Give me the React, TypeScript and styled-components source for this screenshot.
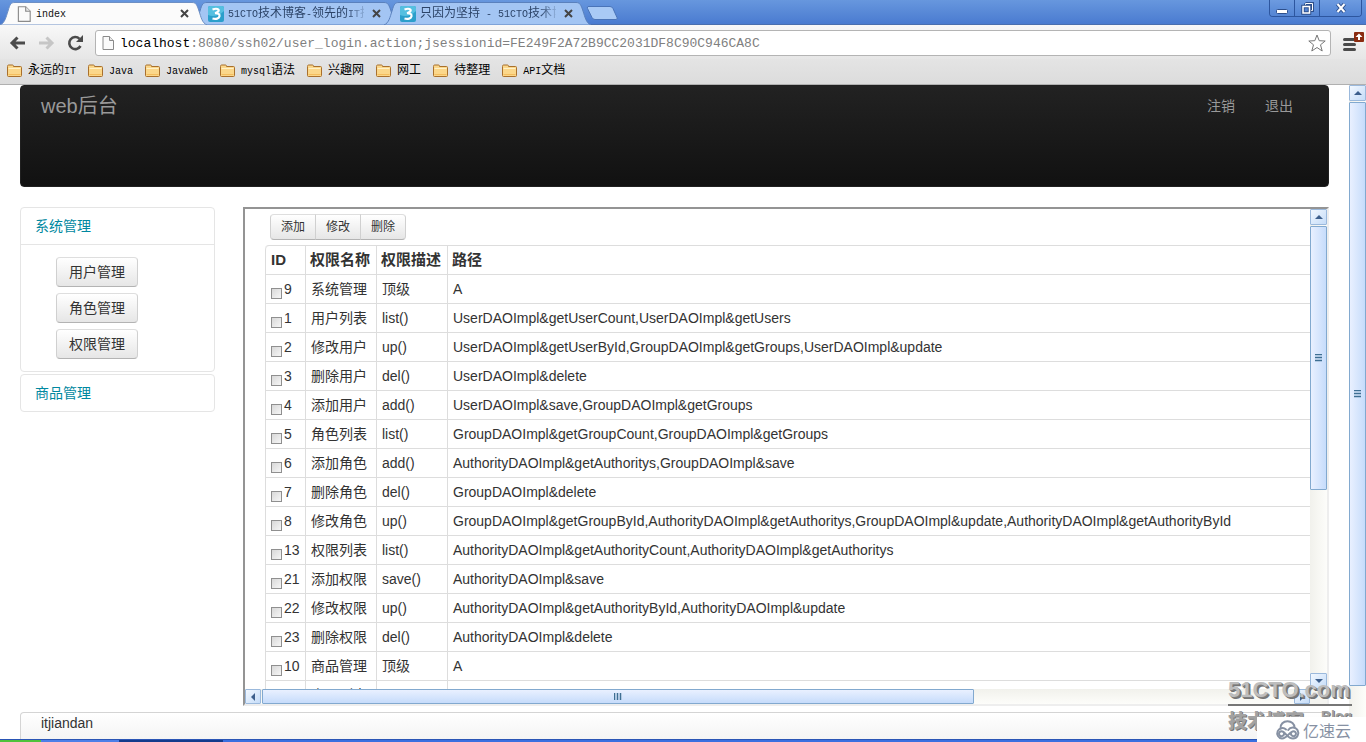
import React from "react";
import styled, { createGlobalStyle, css } from "styled-components";

const SANS = `"Liberation Sans", "Noto Sans CJK SC", sans-serif`;
const MONO = `"Liberation Mono", "Noto Sans CJK SC", monospace`;

const GlobalStyle = createGlobalStyle`
  *, *::before, *::after { box-sizing: border-box; }
  html, body, #root { height: 100%; }
  body { margin: 0; background: #fff; color: #333; font: 14px/20px ${SANS}; overflow: hidden; }
  button, input { font-family: inherit; }
`;

const Window = styled.div`
  position: relative;
  display: flex;
  flex-direction: column;
  height: 100vh;
  overflow: hidden;
`;

/* ---------- browser chrome ---------- */

const TabStrip = styled.header`
  display: flex;
  flex: none;
  height: 25px;
  padding-top: 1px;
  background: linear-gradient(#6797de, #4a7bd0);
  border-bottom: 1px solid #4a6fae;
`;

const TabBox = styled.div<{ $active?: boolean }>`
  position: relative;
  z-index: ${(p) => (p.$active ? 2 : 1)};
  display: flex;
  align-items: center;
  width: 192px;
  height: 24px;
  padding: 1px 0 0 16px;
  color: ${(p) => (p.$active ? "#111" : "#2c4468")};
`;

const TabShape = styled.svg`
  position: absolute;
  left: 0;
  top: 0;
  z-index: -1;
`;

const TabTitle = styled.span<{ $fade?: boolean }>`
  width: 136px;
  margin-left: 4px;
  overflow: hidden;
  white-space: nowrap;
  font: 12px/20px ${MONO};
  ${(p) =>
    p.$fade &&
    css`
      mask-image: linear-gradient(90deg, #000 120px, transparent 140px);
    `}
`;

const Latin = styled.span`
  font-size: 10px;
  line-height: 1;
`;

const CloseButton = styled.button`
  display: flex;
  align-items: center;
  justify-content: center;
  width: 16px;
  height: 16px;
  margin-left: 4px;
  padding: 0;
  border: 0;
  background: none;
`;

const NewTab = styled.button`
  margin: 4px 0 0 10px;
  padding: 0;
  width: 32px;
  height: 16px;
  border: 0;
  background: none;
  line-height: 0;
`;

const WindowButtons = styled.div`
  display: flex;
  height: 17px;
  margin: -1px 4px 0 auto;
  border: 1px solid #2d569f;
  border-top: 0;
  border-radius: 0 0 4px 4px;
  overflow: hidden;
`;

const WindowButton = styled.button<{ $wide?: boolean }>`
  display: flex;
  align-items: center;
  justify-content: center;
  width: ${(p) => (p.$wide ? 41 : 25)}px;
  padding: 0;
  border: 0;
  border-right: ${(p) => (p.$wide ? "0" : "1px solid #2d569f")};
  background: linear-gradient(#6d9be0, #5485d4);
`;

const Toolbar = styled.form`
  display: flex;
  align-items: center;
  flex: none;
  height: 34px;
  padding: 2px 8px 0 8px;
  background: linear-gradient(#f8f8f8, #e6e6e6);
`;

const ToolButton = styled.button`
  display: flex;
  align-items: center;
  justify-content: center;
  width: 18px;
  height: 20px;
  margin-right: 11px;
  padding: 0;
  border: 0;
  background: none;
`;

const Omnibox = styled.div`
  display: flex;
  align-items: center;
  flex: 1;
  height: 26px;
  padding: 0 4px 0 5px;
  border: 1px solid #b4b4b4;
  border-radius: 3px;
  background: #fff;
`;

const Address = styled.a`
  flex: 1;
  margin-left: 5px;
  padding-top: 2px;
  color: #808080;
  font: 13px/22px ${MONO};
  text-decoration: none;
  white-space: nowrap;
`;

const Host = styled.span`
  color: #000;
`;

const MenuButton = styled.button`
  width: 20px;
  height: 24px;
  margin: -6px 0 0 7px;
  padding: 0;
  border: 0;
  background: none;
  line-height: 0;
`;

const BookmarkBar = styled.nav`
  display: flex;
  align-items: center;
  flex: none;
  gap: 12px;
  height: 26px;
  padding: 0 7px 2px;
  background: linear-gradient(#e4e4e4, #dcdcdc);
  border-bottom: 1px solid #b0b0b0;
`;

const Bookmark = styled.a`
  display: flex;
  align-items: center;
  gap: 6px;
  color: #000;
  font: 12px/20px ${MONO};
  text-decoration: none;
  white-space: nowrap;
`;

/* ---------- page ---------- */

const Viewport = styled.div`
  display: flex;
  flex: 1;
  min-height: 0;
`;

const Page = styled.div`
  display: flex;
  flex: 1;
  flex-direction: column;
  min-width: 0;
  padding: 0 20px;
`;

const Navbar = styled.nav`
  display: flex;
  align-items: flex-start;
  justify-content: space-between;
  flex: none;
  height: 102px;
  padding: 10px 20px;
  border: 1px solid #202020;
  border-radius: 4px;
  background: linear-gradient(#222, #111);
`;

const Brand = styled.a`
  color: #999;
  font-size: 20px;
  text-decoration: none;
`;

const NavLinks = styled.div`
  display: flex;
  padding-right: 15px;
  gap: 30px;
`;

const NavLink = styled.a`
  color: #999;
  text-decoration: none;
`;

const Columns = styled.div`
  display: flex;
  flex: 1;
  gap: 28px;
  min-height: 0;
  padding: 20px 0 6px;
`;

const Sidebar = styled.aside`
  display: flex;
  flex: none;
  flex-direction: column;
  gap: 2px;
  width: 195px;
`;

const Group = styled.section`
  border: 1px solid #e5e5e5;
  border-radius: 4px;
`;

const GroupLink = styled.a`
  display: block;
  padding: 8px 14px;
  color: #0088a0;
  text-decoration: none;
`;

const GroupBody = styled.div`
  display: flex;
  flex-direction: column;
  align-items: flex-start;
  gap: 6px;
  padding: 12px 35px;
  border-top: 1px solid #e5e5e5;
`;

const buttonFace = css`
  border: 1px solid #ccc;
  border-color: #dedede #d0d0d0 #b3b3b3;
  background: linear-gradient(#fff, #e6e6e6);
  color: #333;
`;

const Button = styled.button`
  ${buttonFace}
  height: 30px;
  padding: 0 12px;
  border-radius: 4px;
  font-size: 14px;
  line-height: 20px;
`;

const Frame = styled.main`
  display: grid;
  flex: 1;
  grid-template: minmax(0, 1fr) 15px / minmax(0, 1fr) 17px;
  min-width: 0;
  border: 2px solid #eee;
  border-top-color: #949494;
  border-left-color: #949494;
`;

const FrameBody = styled.div`
  overflow: hidden;
  padding: 5px 0 0 20px;
`;

const ButtonGroup = styled.div`
  display: flex;
  margin: 0 0 5px 5px;
`;

const SmallButton = styled.button`
  ${buttonFace}
  height: 26px;
  width: 46px;
  padding: 0;
  font-size: 12px;
  line-height: 20px;
  & + & { margin-left: -1px; }
  &:first-child { border-radius: 4px 0 0 4px; }
  &:last-child { border-radius: 0 4px 4px 0; }
`;

const Table = styled.table`
  width: 130%;
  table-layout: fixed;
  border: 1px solid #ddd;
  border-left: 0;
  border-radius: 4px;
  border-collapse: separate;
  border-spacing: 0;
  white-space: nowrap;
`;

const Col = styled.col<{ $width?: number }>`
  width: ${(p) => (p.$width ? `${p.$width}px` : "auto")};
`;

const HeadCell = styled.th`
  height: 28px;
  padding: 4px;
  border-left: 1px solid #ddd;
  font-size: 15px;
  line-height: 20px;
  text-align: left;
  &:first-child { padding-left: 5px; border-top-left-radius: 4px; }
`;

const Cell = styled.td`
  height: 29px;
  padding: 4px 5px;
  border-top: 1px solid #ddd;
  border-left: 1px solid #ddd;
  line-height: 20px;
`;

const RowLabel = styled.label`
  display: flex;
  gap: 2px;
`;

const Check = styled.input`
  appearance: none;
  flex: none;
  width: 11px;
  height: 11px;
  margin: 9px 0 0;
  border: 1px solid #8f8f8f;
  background: linear-gradient(135deg, #d8d8d8, #f6f6f6);
`;

const Footer = styled.footer`
  flex: none;
  height: 27px;
  padding: 0 20px;
  border: 1px solid #d4d4d4;
  border-bottom: 0;
  border-radius: 4px 4px 0 0;
  background: linear-gradient(#fff, #f4f4f4);
`;

/* ---------- scroll bars ---------- */

const Scroll = styled.div<{ $across?: boolean }>`
  display: flex;
  flex: none;
  flex-direction: ${(p) => (p.$across ? "row" : "column")};
  ${(p) => (p.$across ? "height: 15px;" : "width: 17px;")}
  background: linear-gradient(${(p) => (p.$across ? "180deg" : "90deg")}, #f1f1ec, #fdfdfa);
`;

const ScrollButton = styled.button<{ $across?: boolean }>`
  display: flex;
  align-items: center;
  justify-content: center;
  flex: 0 0 16px;
  width: ${(p) => (p.$across ? "16px" : "auto")};
  padding: 0;
  border: 1px solid #9bb9dc;
  border-radius: 1px;
  background: linear-gradient(135deg, #f2f8ff, #c5dcf8);
`;

const Track = styled.div<{ $across?: boolean }>`
  display: flex;
  flex: 1;
  flex-direction: ${(p) => (p.$across ? "row" : "column")};
  padding: ${(p) => (p.$across ? "0 0 0 1px" : "1px 0 0")};
`;

const Thumb = styled.div<{ $across?: boolean; $size: number }>`
  display: flex;
  align-items: center;
  justify-content: center;
  flex: 0 0 ${(p) => p.$size}%;
  border: 1px solid #82a9cf;
  border-radius: 1px;
  background: linear-gradient(${(p) => (p.$across ? "180deg" : "90deg")}, #e9f0ff, #c6dcfb);
`;

const Corner = styled.div`
  background: #f4f4f0;
`;

/* ---------- taskbar and stamps ---------- */

const Taskbar = styled.div`
  display: flex;
  flex: none;
  height: 3px;
  background: #3a6fe0;
  border-top: 1px solid #2a55b5;
`;

const StartEdge = styled.div`
  width: 41px;
  background: #4fc23c;
`;

const TaskEdge = styled.div<{ $dark?: boolean }>`
  width: ${(p) => (p.$dark ? 104 : 78)}px;
  background: ${(p) => (p.$dark ? "#133b8c" : "#4c7fe8")};
`;

const Stamp = styled.div`
  position: absolute;
  right: 14px;
  bottom: 10px;
  width: 124px;
  color: #bdbdbd;
  font: bold 22px/28px "Liberation Sans", sans-serif;
  text-shadow: 1px 1px 0 #7d7d7d, 2px 2px 0 #757575;
  white-space: nowrap;
`;

const StampLine = styled.div`
  display: flex;
  justify-content: space-between;
  padding-top: 2px;
  border-top: 2px solid #777;
  color: #a2a2a2;
  font: 900 19px/24px "Noto Sans CJK SC", sans-serif;
  text-shadow: 1px 1px 0 #777;
`;

const StampBlog = styled.span`
  font: bold 14px/16px "Liberation Sans", sans-serif;
`;

const CloudMark = styled.div`
  position: absolute;
  right: 0;
  bottom: 0;
  display: flex;
  align-items: center;
  gap: 2px;
  width: 109px;
  height: 25px;
  padding-left: 18px;
  background: #fff;
  color: #8791a3;
  font: 16px/24px "Noto Sans CJK SC", sans-serif;
  white-space: nowrap;
`;

/* ---------- data ---------- */

const bookmarks = ["永远的IT", "Java", "JavaWeb", "mysql语法", "兴趣网", "网工", "待整理", "API文档"];

const rows: [string, string, string, string][] = [
  ["9", "系统管理", "顶级", "A"],
  ["1", "用户列表", "list()", "UserDAOImpl&getUserCount,UserDAOImpl&getUsers"],
  ["2", "修改用户", "up()", "UserDAOImpl&getUserById,GroupDAOImpl&getGroups,UserDAOImpl&update"],
  ["3", "删除用户", "del()", "UserDAOImpl&delete"],
  ["4", "添加用户", "add()", "UserDAOImpl&save,GroupDAOImpl&getGroups"],
  ["5", "角色列表", "list()", "GroupDAOImpl&getGroupCount,GroupDAOImpl&getGroups"],
  ["6", "添加角色", "add()", "AuthorityDAOImpl&getAuthoritys,GroupDAOImpl&save"],
  ["7", "删除角色", "del()", "GroupDAOImpl&delete"],
  ["8", "修改角色", "up()", "GroupDAOImpl&getGroupById,AuthorityDAOImpl&getAuthoritys,GroupDAOImpl&update,AuthorityDAOImpl&getAuthorityById"],
  ["13", "权限列表", "list()", "AuthorityDAOImpl&getAuthorityCount,AuthorityDAOImpl&getAuthoritys"],
  ["21", "添加权限", "save()", "AuthorityDAOImpl&save"],
  ["22", "修改权限", "up()", "AuthorityDAOImpl&getAuthorityById,AuthorityDAOImpl&update"],
  ["23", "删除权限", "del()", "AuthorityDAOImpl&delete"],
  ["10", "商品管理", "顶级", "A"],
];

/* ---------- small pieces ---------- */

function Mixed({ text }: { text: string }) {
  return (
    <>
      {text.split(/([\x20-\x7e]+)/).map((part, i) =>
        i % 2 ? <Latin key={i}>{part}</Latin> : part
      )}
    </>
  );
}

function PageIcon({ size = 14 }: { size?: number }) {
  return (
    <svg width={size} height={size + 2} viewBox="0 0 14 16" aria-hidden>
      <path d="M2 1.5h6.5l4 4v9H2z" fill="#fafafa" stroke="#8a8a8a" />
      <path d="M8.5 1.5v4h4" fill="#e8e8e8" stroke="#8a8a8a" />
    </svg>
  );
}

function SiteIcon() {
  return (
    <svg width="16" height="16" viewBox="0 0 16 16" aria-hidden>
      <rect width="16" height="16" rx="2" fill="#2b9fcb" />
      <path d="M0 9c5 2 11 1 16-4V2a2 2 0 0 0-2-2H2a2 2 0 0 0-2 2z" fill="#55bfe0" />
      <path d="M4.5 3.5c4-1.500 7-.5 6 1.500-.5 1.200-2 1.800-3.500 2.200 3-.2 5 1 4.500 3C11 12.500 8 13.500 4.500 12.500" fill="none" stroke="#fff" strokeWidth="2.200" />
    </svg>
  );
}

function FolderIcon() {
  return (
    <svg width="15" height="14" viewBox="0 0 15 14" aria-hidden>
      <path d="M.5 2.500q0-1.500 1-1.500h4q1 0 1 1.500h7q1 0 1 1v8q0 1-1 1h-12q-1 0-1-1z" fill="#fbd78a" stroke="#a9702c" />
      <path d="M1.500 4.500h12" stroke="#fff1c8" />
      <path d="M1.500 10.500h12" stroke="#f3bd5e" />
    </svg>
  );
}

function Tab({ title, active }: { title: string; active?: boolean }) {
  return (
    <TabBox $active={active}>
      <TabShape width="208" height="24" viewBox="0 0 208 24" aria-hidden>
        <path
          d="M0 24C5 22 6 16 8 10C10 3 11 1.500 15 1.500H192C196 1.500 197 4 199 10C201 16 202 22 207 24Z"
          fill={active ? "#fbfbfb" : "#a3c5f3"}
          stroke={active ? "#6d8fc4" : "#5a81bd"}
        />
      </TabShape>
      {active ? <PageIcon size={16} /> : <SiteIcon />}
      <TabTitle $fade={!active}><Mixed text={title} /></TabTitle>
      <CloseButton aria-label="关闭标签页">
        <svg width="9" height="9" viewBox="0 0 9 9"><path d="M1 1l7 7M8 1l-7 7" stroke="#444" strokeWidth="2" /></svg>
      </CloseButton>
    </TabBox>
  );
}

const arrows = { up: "M0 6L4 2L8 6z", down: "M0 2L4 6L8 2z", left: "M6 0L2 4L6 8z", right: "M2 0L6 4L2 8z" };

function Arrow({ to }: { to: keyof typeof arrows }) {
  return (
    <ScrollButton type="button" aria-label={to} $across={to === "left" || to === "right"}>
      <svg width="8" height="8" viewBox="0 0 8 8"><path d={arrows[to]} fill="#3d5f8c" /></svg>
    </ScrollButton>
  );
}

function ScrollBar({ across, size }: { across?: boolean; size: number }) {
  return (
    <Scroll $across={across}>
      <Arrow to={across ? "left" : "up"} />
      <Track $across={across}>
        <Thumb $across={across} $size={size}>
          <svg width="8" height="8" viewBox="0 0 8 8">
            <path d={across ? "M.5 0v7M3.500 0v7M6.500 0v7" : "M0 .5h7M0 3.500h7M0 6.500h7"} stroke="#3f6f93" strokeWidth="1.500" />
          </svg>
        </Thumb>
      </Track>
      <Arrow to={across ? "right" : "down"} />
    </Scroll>
  );
}

export default function App() {
  return (
    <Window>
      <GlobalStyle />
      <TabStrip>
        <Tab title="index" active />
        <Tab title="51CTO技术博客-领先的IT技" />
        <Tab title="只因为坚持 - 51CTO技术博" />
        <NewTab aria-label="新标签页">
          <svg width="32" height="16" viewBox="0 0 32 16">
            <path d="M2 1.500h22q2 0 3 2l4 9q1 2-1 2H9q-2 0-3-2L1.500 3.500Q1 1.500 2 1.500z" fill="#a9caf5" stroke="#4a74b8" />
          </svg>
        </NewTab>
        <WindowButtons>
          <WindowButton aria-label="最小化">
            <svg width="12" height="14" viewBox="0 0 12 14"><rect x=".5" y="8.500" width="11" height="4" rx="1" fill="#fff" stroke="#2d4f8c" /></svg>
          </WindowButton>
          <WindowButton aria-label="还原">
            <svg width="13" height="13" viewBox="0 0 13 13">
              <path d="M4.500 1.500h7v7h-2M4.500 1.500v2" fill="none" stroke="#2d4f8c" strokeWidth="3" />
              <path d="M4.500 1.500h7v7h-2M4.500 1.500v2" fill="none" stroke="#fff" />
              <rect x="2" y="4.500" width="6.500" height="6.500" fill="#5485d4" stroke="#2d4f8c" strokeWidth="3.500" />
              <rect x="2" y="4.500" width="6.500" height="6.500" fill="none" stroke="#fff" strokeWidth="1.500" />
            </svg>
          </WindowButton>
          <WindowButton $wide aria-label="关闭">
            <svg width="12" height="12" viewBox="0 0 12 12">
              <path d="M2.500 2l7 8M9.500 2l-7 8" stroke="#2d4f8c" strokeWidth="4" />
              <path d="M2.500 2l7 8M9.500 2l-7 8" stroke="#fff" strokeWidth="2" />
            </svg>
          </WindowButton>
        </WindowButtons>
      </TabStrip>

      <Toolbar onSubmit={(e) => e.preventDefault()}>
        <ToolButton type="button" aria-label="后退">
          <svg width="17" height="14" viewBox="0 0 17 14"><path d="M16 7H3M8.500 1.500L3 7l5.500 5.500" fill="none" stroke="#4b4b4b" strokeWidth="3" /></svg>
        </ToolButton>
        <ToolButton type="button" aria-label="前进">
          <svg width="17" height="14" viewBox="0 0 17 14"><path d="M1 7h13M8.500 1.500L14 7l-5.500 5.500" fill="none" stroke="#c6c6c6" strokeWidth="3" /></svg>
        </ToolButton>
        <ToolButton type="button" aria-label="重新加载">
          <svg width="17" height="16" viewBox="0 0 17 16">
            <path d="M13.500 11A6 6 0 1 1 12.500 3.800" fill="none" stroke="#4b4b4b" strokeWidth="2.600" />
            <path d="M16 0v7H9z" fill="#4b4b4b" />
          </svg>
        </ToolButton>
        <Omnibox>
          <PageIcon size={14} />
          <Address href="#"><Host>localhost</Host>:8080/ssh02/user_login.action;jsessionid=FE249F2A72B9CC2031DF8C90C946CA8C</Address>
          <svg width="18" height="18" viewBox="0 0 18 18" aria-hidden>
            <path d="M9 1l2.200 5.700 6 .3-4.700 3.800L14.200 17 9 13.500 3.800 17l1.700-6.200L.8 7l6-.3z" fill="#fff" stroke="#777" strokeLinejoin="round" />
          </svg>
        </Omnibox>
        <MenuButton type="button" aria-label="菜单">
          <svg width="26" height="24" viewBox="0 0 26 24">
            <path d="M6.500 11.500h10M6.500 16.500h10M6.500 21.500h10" stroke="#4b4b4b" strokeWidth="3" strokeLinecap="round" />
            <rect x="16" y="4" width="10" height="10" rx="1" fill="#8a2b10" />
            <path d="M21 5.500l3.500 3.500h-2.500v3h-2v-3h-2.500z" fill="#fff" />
          </svg>
        </MenuButton>
      </Toolbar>

      <BookmarkBar>
        {bookmarks.map((name) => (
          <Bookmark href="#" key={name}>
            <FolderIcon />
            <span><Mixed text={name} /></span>
          </Bookmark>
        ))}
      </BookmarkBar>

      <Viewport>
        <Page>
          <Navbar>
            <Brand href="#">web后台</Brand>
            <NavLinks>
              <NavLink href="#">注销</NavLink>
              <NavLink href="#">退出</NavLink>
            </NavLinks>
          </Navbar>
          <Columns>
            <Sidebar>
              <Group>
                <GroupLink href="#">系统管理</GroupLink>
                <GroupBody>
                  <Button>用户管理</Button>
                  <Button>角色管理</Button>
                  <Button>权限管理</Button>
                </GroupBody>
              </Group>
              <Group>
                <GroupLink href="#">商品管理</GroupLink>
              </Group>
            </Sidebar>
            <Frame>
              <FrameBody>
                <ButtonGroup>
                  <SmallButton>添加</SmallButton>
                  <SmallButton>修改</SmallButton>
                  <SmallButton>删除</SmallButton>
                </ButtonGroup>
                <Table>
                  <colgroup>
                    <Col $width={40} />
                    <Col $width={71} />
                    <Col $width={71} />
                    <Col />
                  </colgroup>
                  <thead>
                    <tr>
                      <HeadCell>ID</HeadCell>
                      <HeadCell>权限名称</HeadCell>
                      <HeadCell>权限描述</HeadCell>
                      <HeadCell>路径</HeadCell>
                    </tr>
                  </thead>
                  <tbody>
                    {rows.map(([id, name, desc, path]) => (
                      <tr key={id}>
                        <Cell><RowLabel><Check type="checkbox" />{id}</RowLabel></Cell>
                        <Cell>{name}</Cell>
                        <Cell>{desc}</Cell>
                        <Cell>{path}</Cell>
                      </tr>
                    ))}
                    <tr>
                      <Cell />
                      <Cell>商品列表</Cell>
                      <Cell />
                      <Cell />
                    </tr>
                  </tbody>
                </Table>
              </FrameBody>
              <ScrollBar size={59} />
              <ScrollBar across size={69} />
              <Corner />
            </Frame>
          </Columns>
          <Footer>itjiandan</Footer>
        </Page>
        <ScrollBar size={94} />
      </Viewport>

      <Taskbar>
        <StartEdge />
        <TaskEdge />
        <TaskEdge $dark />
      </Taskbar>

      <Stamp>
        51CTO.com
        <StampLine>
          技术博客
          <StampBlog>Blog</StampBlog>
        </StampLine>
      </Stamp>
      <CloudMark>
        <svg width="26" height="20" viewBox="0 0 26 20" fill="none" stroke="#8791a3" strokeWidth="2" strokeLinecap="round" aria-hidden>
          <path d="M5.500 8.500C5 4 8.500 1.200 12.500 1.200c4 0 7 2.800 7 6.300" />
          <path d="M9 13.500a2.500 2.500 0 1 1-2.500-2.300c4 0 5.500 7.300 11.500 7.300a5.500 5.500 0 1 0-4.800-8.500" />
          <path d="M16 13.500a2.500 2.500 0 1 0 2.500-2.300c-4 0-6 7.300-11.500 7.300A5.200 5.200 0 1 1 11 9.500" />
        </svg>
        亿速云
      </CloudMark>
    </Window>
  );
}
